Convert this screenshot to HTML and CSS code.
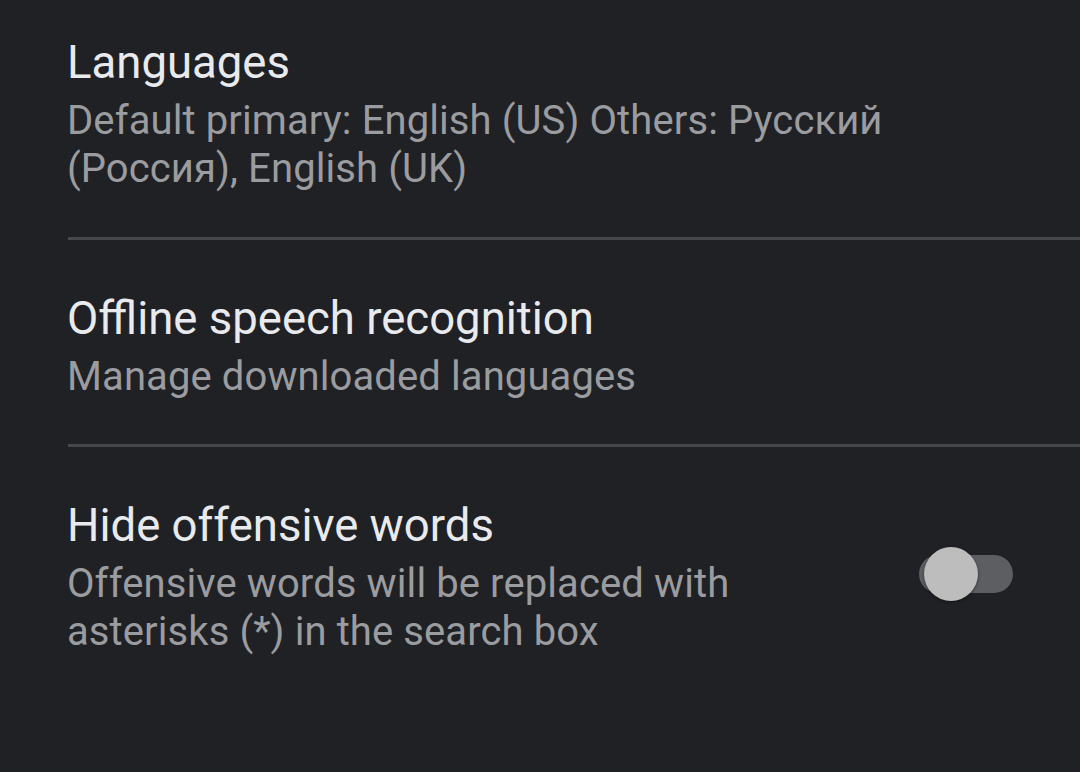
FILE: index.html
```html
<!DOCTYPE html>
<html lang="en">
<head>
<meta charset="utf-8">
<title>Voice settings</title>
<link rel="stylesheet" href="styles.css">
</head>
<body>
<div class="list">
  <div class="item item-first">
    <div class="text">
      <div class="title">Languages</div>
      <div class="summary">Default primary: English (US) Others: Русский (Россия), English (UK)</div>
    </div>
  </div>
  <div class="divider"></div>
  <div class="item">
    <div class="text">
      <div class="title">Offline speech recognition</div>
      <div class="summary">Manage downloaded languages</div>
    </div>
  </div>
  <div class="divider"></div>
  <div class="item item-last">
    <div class="text">
      <div class="title">Hide offensive words</div>
      <div class="summary">Offensive words will be replaced with asterisks (*) in the search box</div>
    </div>
    <div class="switch" role="switch" aria-checked="false">
      <div class="track"></div>
      <div class="thumb"></div>
    </div>
  </div>
</div>
</body>
</html>
```

FILE: styles.css
```css
html, body {
  margin: 0;
  padding: 0;
  background: #202124;
}
body {
  width: 1080px;
  height: 772px;
  overflow: hidden;
  font-family: Roboto, "Noto Sans", "Liberation Sans", sans-serif;
}
.list {
  display: flex;
  flex-direction: column;
}
.item {
  display: flex;
  align-items: center;
  padding: 51px 67px 43px 67px;
}
.item-first {
  padding-top: 35px;
  padding-bottom: 44px;
}
.item-last {
  padding-top: 51px;
}
.text {
  flex: 1;
  display: flex;
  flex-direction: column;
  gap: 6px;
  min-width: 0;
}
.title {
  font-size: 45.5px;
  line-height: 56px;
  color: #e8eaed;
}
.summary {
  font-size: 40px;
  line-height: 48px;
  letter-spacing: 0.1px;
  color: #9a9ca0;
}
.divider {
  height: 3px;
  margin-left: 68px;
  background: #45474a;
}
.switch {
  position: relative;
  flex: none;
  width: 94px;
  height: 56px;
  margin-left: 60px;
  margin-bottom: 6px;
  display: flex;
  align-items: center;
}
.track {
  width: 94px;
  height: 38px;
  border-radius: 19px;
  background: #5d5e62;
}
.thumb {
  position: absolute;
  left: 5px;
  top: 1px;
  width: 54px;
  height: 54px;
  border-radius: 50%;
  background: #bdbdbd;
  box-shadow: 0 1px 3px rgba(0,0,0,0.5);
}
```
